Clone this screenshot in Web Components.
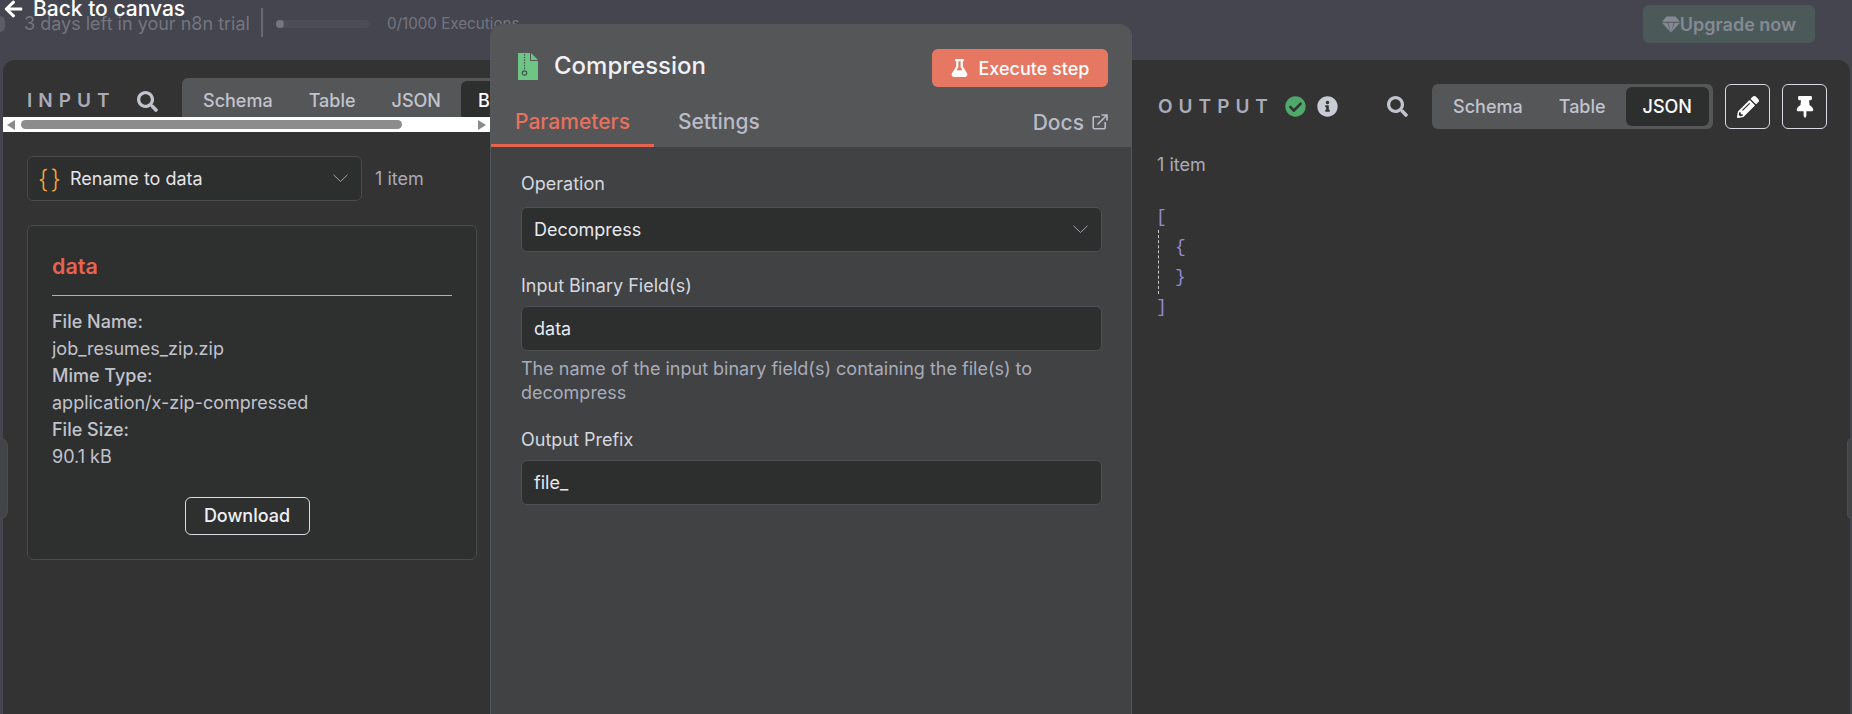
<!DOCTYPE html>
<html lang="en">
<head>
<meta charset="utf-8">
<title>Compression</title>
<style>
  html, body { margin: 0; height: 100%; overflow: hidden; background: #45454f; }
  body { font-family: Inter, "Liberation Sans", sans-serif; }
</style>
</head>
<body>

<ndv-shell>
  <trial-bar slot="top"></trial-bar>
  <input-panel slot="left"></input-panel>
  <node-modal slot="middle">
    <node-param label="Operation" value="Decompress" select first></node-param>
    <node-param label="Input Binary Field(s)" value="data" hint="The name of the input binary field(s) containing the file(s) to decompress"></node-param>
    <node-param label="Output Prefix" value="file_"></node-param>
  </node-modal>
  <output-panel slot="right"></output-panel>
</ndv-shell>

<script>
const ICONS = {
  search: '<svg viewBox="0 0 512 512" fill="currentColor"><path d="M505 442.7L405.3 343c-4.5-4.5-10.6-7-17-7H372c27.6-35.3 44-79.7 44-128C416 93.1 322.9 0 208 0S0 93.1 0 208s93.1 208 208 208c48.3 0 92.7-16.4 128-44v16.3c0 6.4 2.5 12.5 7 17l99.7 99.7c9.4 9.4 24.6 9.4 33.9 0l28.3-28.3c9.4-9.4 9.4-24.6.1-34zM208 336c-70.7 0-128-57.2-128-128 0-70.7 57.2-128 128-128 70.7 0 128 57.2 128 128 0 70.7-57.2 128-128 128z"/></svg>',
  check: '<svg viewBox="0 0 512 512" fill="currentColor"><path d="M504 256c0 136.967-111.033 248-248 248S8 392.967 8 256 119.033 8 256 8s248 111.033 248 248zM227.314 387.314l184-184c6.248-6.248 6.248-16.379 0-22.627l-22.627-22.627c-6.248-6.249-16.379-6.249-22.628 0L216 308.118l-70.059-70.059c-6.248-6.248-16.379-6.248-22.628 0l-22.627 22.627c-6.248 6.248-6.248 16.379 0 22.627l104 104c6.249 6.249 16.379 6.249 22.628.001z"/></svg>',
  info: '<svg viewBox="0 0 512 512" fill="currentColor"><path d="M256 8C119.043 8 8 119.083 8 256c0 136.997 111.043 248 248 248s248-111.003 248-248C504 119.083 392.957 8 256 8zm0 110c23.196 0 42 18.804 42 42s-18.804 42-42 42-42-18.804-42-42 18.804-42 42-42zm56 254c0 6.627-5.373 12-12 12h-88c-6.627 0-12-5.373-12-12v-24c0-6.627 5.373-12 12-12h12v-64h-12c-6.627 0-12-5.373-12-12v-24c0-6.627 5.373-12 12-12h64c6.627 0 12 5.373 12 12v100h12c6.627 0 12 5.373 12 12v24z"/></svg>',
  pen: '<svg viewBox="0 0 512 512" fill="currentColor"><path d="M497.9 142.1l-46.1 46.1c-4.7 4.7-12.3 4.7-17 0l-111-111c-4.7-4.7-4.7-12.3 0-17l46.1-46.1c18.7-18.7 49.1-18.7 67.9 0l60.1 60.1c18.8 18.7 18.8 49.1 0 67.9zM284.2 99.8L21.6 362.4.4 483.9c-2.9 16.4 11.4 30.6 27.8 27.8l121.5-21.3 262.6-262.6c4.7-4.7 4.7-12.3 0-17l-111-111c-4.8-4.7-12.4-4.7-17.1 0zM124.1 339.9c-5.5-5.5-5.5-14.3 0-19.8l154-154c5.5-5.5 14.3-5.5 19.8 0s5.5 14.3 0 19.8l-154 154c-5.5 5.5-14.3 5.5-19.8 0zM88 424h48v36.3l-64.5 11.3-31.1-31.1L51.7 376H88v48z"/></svg>',
  pin: '<svg viewBox="0 0 384 512" fill="currentColor"><path d="M298.028 214.267L285.793 96H328c13.255 0 24-10.745 24-24V24c0-13.255-10.745-24-24-24H56C42.745 0 32 10.745 32 24v48c0 13.255 10.745 24 24 24h42.207L85.972 214.267C37.465 236.82 0 277.261 0 328c0 13.255 10.745 24 24 24h136v104.007c0 1.242.289 2.467.845 3.578l24 48c2.941 5.882 11.364 5.893 14.311 0l24-48a8.008 8.008 0 0 0 .845-3.578V352h136c13.255 0 24-10.745 24-24-.001-51.183-37.983-91.42-85.973-113.733z"/></svg>',
  flask: '<svg viewBox="0 0 448 512" fill="currentColor"><path d="M437.2 403.5L320 215V64h8c13.3 0 24-10.7 24-24V24c0-13.3-10.7-24-24-24H120c-13.3 0-24 10.7-24 24v16c0 13.3 10.7 24 24 24h8v151L10.8 403.5C-18.5 450.6 15.2 512 70.9 512h306.2c55.8 0 89.4-61.5 60.1-108.5zM137.9 320l48.2-77.6c3.7-5.2 5.8-11.6 5.8-18.4V64h64v160c0 6.9 2.2 13.2 5.8 18.4l48.2 77.6h-172z"/></svg>',
  back: '<svg viewBox="0 0 448 512" fill="currentColor"><path d="M257.5 445.1l-22.2 22.2c-9.4 9.4-24.6 9.4-33.9 0L7 273c-9.4-9.4-9.4-24.6 0-33.9L201.4 44.7c9.4-9.4 24.6-9.4 33.9 0l22.2 22.2c9.5 9.5 9.3 25-.4 34.3L136.6 216H424c13.3 0 24 10.7 24 24v32c0 13.3-10.7 24-24 24H136.6l120.5 114.8c9.8 9.3 10 24.8.4 34.3z"/></svg>',
  chevron: '<svg viewBox="0 0 16 9" fill="none" stroke="currentColor" stroke-width="1" style="display:block"><path d="M.5.8 8 8 15.500.8"/></svg>',
  gem: '<svg viewBox="0 0 20 18" fill="currentColor"><path d="M5 0h10l5 6H0zM0 7h6l4 11zM7 7h6l-3 11zM14 7h6L10 18z"/></svg>',
  external: '<svg viewBox="0 0 16 16" fill="none" stroke="currentColor" stroke-width="1.6"><path d="M8 2.800H2.200a1 1 0 0 0-1 1v10a1 1 0 0 0 1 1h10a1 1 0 0 0 1-1V8M5.500 10.500 14.500 1.500M9.500 1h5.500v5.500"/></svg>',
  zip: '<svg viewBox="0 0 20 27" style="display:block"><path fill="#6fc584" d="M0 0h12v8h8v19H0z"/><path fill="#6fc584" d="M13 0l7 7h-7z"/><path fill="none" stroke="#41594a" stroke-width="1.200" stroke-dasharray="1.500 1.200" d="M6.500 1v15"/><circle cx="6.500" cy="20" r="2.200" fill="none" stroke="#41594a" stroke-width="1.200"/></svg>'
};

class NdvShell extends HTMLElement {
  constructor() {
    super();
    this.attachShadow({ mode: "open" }).innerHTML = `
      <style>
        :host { display: block; height: 714px; position: relative; overflow: hidden; }
        .grid {
          display: grid;
          height: 100%;
          grid-template-columns: 3px 487px 642px 1fr 2px;
          grid-template-rows: 60px 1fr;
        }
        .top { grid-row: 1; grid-column: 1 / -1; }
        .left { grid-row: 2; grid-column: 2; min-width: 0; }
        .middle { grid-row: 1 / 3; grid-column: 3; margin-top: 24px; z-index: 2; min-width: 0; }
        .right { grid-row: 2; grid-column: 4; min-width: 0; }
        .back {
          position: absolute; left: 4px; top: -3px; z-index: 3;
          display: flex; align-items: center; gap: 10px;
          color: #fff; font-size: 21px; font-weight: 500; line-height: 24px;
        }
        .back svg { display: block; width: 19px; height: 20px; }
        .handle {
          position: absolute; top: 438px; height: 81px; width: 8px; z-index: 1;
          background: #434447; border: 1px solid #4c4d50; box-sizing: border-box;
        }
        .handle.l { left: 0; border-left: 0; border-radius: 0 8px 8px 0; }
        .handle.r { right: 0; width: 5px; border-right: 0; border-radius: 8px 0 0 8px; }
      </style>
      <div class="grid">
        <div class="top"><slot name="top"></slot></div>
        <div class="left"><slot name="left"></slot></div>
        <div class="middle"><slot name="middle"></slot></div>
        <div class="right"><slot name="right"></slot></div>
      </div>
      <div class="back">${ICONS.back}<span>Back to canvas</span></div>
      <div class="handle l"></div>
      <div class="handle r"></div>
    `;
  }
}

class TrialBar extends HTMLElement {
  constructor() {
    super();
    this.attachShadow({ mode: "open" }).innerHTML = `
      <style>
        :host { display: block; height: 60px; color: #74757f; }
        .bar { display: flex; align-items: flex-start; height: 100%; padding: 5px 37px 0 0; box-sizing: border-box; }
        .avatar { width: 5px; height: 16px; margin: 11px 19px 0 0; background: #5c5c66; border-radius: 0 8px 8px 0; }
        .trial { font-size: 18px; line-height: 38px; }
        .sep { width: 2px; height: 29px; margin: 3px 13px 0 11px; background: #686974; }
        .progress { width: 93px; height: 8px; margin-top: 15px; background: #4d4d58; border-radius: 4px; position: relative; }
        .progress i { position: absolute; left: 0; top: 0; width: 8px; height: 8px; border-radius: 50%; background: #74757f; }
        .execs { font-size: 15.200px; line-height: 38px; margin-left: 18px; }
        .upgrade {
          margin-left: auto; width: 172px; height: 38px;
          display: flex; align-items: center; justify-content: center;
          background: #4b5a59; color: #868994; border-radius: 6px;
          font-size: 18px; font-weight: 600;
        }
        .upgrade svg { display: block; width: 18px; height: 17px; }
      </style>
      <div class="bar">
        <div class="avatar"></div>
        <div class="trial">3 days left in your n8n trial</div>
        <div class="sep"></div>
        <div class="progress"><i></i></div>
        <div class="execs">0/1000 Executions</div>
        <div class="upgrade">${ICONS.gem}<span>Upgrade now</span></div>
      </div>
    `;
  }
}

class ViewTabs extends HTMLElement {
  constructor() {
    super();
    const items = (this.getAttribute("items") || "").split(",");
    const active = this.getAttribute("active");
    this.attachShadow({ mode: "open" }).innerHTML = `
      <style>
        :host { display: block; }
        .tabs {
          display: inline-flex; height: 45px; box-sizing: border-box; padding: 3px 4px 3px 3px;
          background: #555658; border-radius: 6px; color: #c1c3cd;
          font-size: 18px; font-weight: 500;
        }
        .tab { padding: 0 18px; line-height: 39px; border-radius: 6px; }
        .tab.on { background: #2d2e2e; color: #fff; padding: 0 17px; margin-left: 2px; }
      </style>
      <div class="tabs">
        ${items.map((t) => `<div class="tab ${t === active ? "on" : ""}">${t}</div>`).join("")}
      </div>
    `;
  }
}

class InputPanel extends HTMLElement {
  constructor() {
    super();
    this.attachShadow({ mode: "open" }).innerHTML = `
      <style>
        :host { display: block; height: 100%; background: #333333; border-radius: 12px 0 0 0; color: #c1c3cd; overflow: hidden; }
        .head {
          height: 57px; box-sizing: border-box; padding: 18px 0 0 24px; overflow: hidden;
          display: flex; align-items: flex-start;
        }
        .title { width: 87px; font-size: 19px; font-weight: 600; letter-spacing: 6px; color: #a9abb8; line-height: 45px; white-space: nowrap; }
        .search { width: 21px; height: 21px; margin: 13px 24px 0 23px; color: #c1c3cd; flex: none; }
        .search svg { display: block; }
        view-tabs { flex: none; }
        .body { padding: 24px; }
        .row { display: flex; align-items: center; gap: 13px; }
        .select {
          width: 335px; height: 45px; box-sizing: border-box; display: flex; align-items: center;
          padding: 0 13px 0 10px; background: #2d2e2e; border: 1px solid #4a4b4d; border-radius: 6px;
          color: #e4e5ea; font-size: 18px; font-weight: 400;
        }
        .curly { color: #f0a23c; font-size: 25px; font-weight: 300; width: 32px; letter-spacing: 2px; line-height: 28px; }
        .chev { width: 15px; height: 9px; margin-left: auto; color: #a9abb8; }
        .count { color: #a9abb8; font-size: 18px; }
      </style>
      <div class="head">
        <div class="title">INPUT</div>
        <div class="search">${ICONS.search}</div>
        <view-tabs items="Schema,Table,JSON,Binary" active="Binary"></view-tabs>
      </div>
      <fake-scrollbar></fake-scrollbar>
      <div class="body">
        <div class="row">
          <div class="select"><span class="curly">{}</span><span>Rename to data</span><div class="chev">${ICONS.chevron}</div></div>
          <div class="count">1 item</div>
        </div>
        <binary-card></binary-card>
      </div>
    `;
  }
}

class FakeScrollbar extends HTMLElement {
  constructor() {
    super();
    this.attachShadow({ mode: "open" }).innerHTML = `
      <style>
        :host { display: flex; align-items: center; height: 15px; background: #fff; }
        .arrow { width: 0; height: 0; border-top: 5px solid transparent; border-bottom: 5px solid transparent; }
        .arrow.l { margin-left: 4px; border-right: 8px solid #8a8a8a; }
        .arrow.r { margin-left: 76px; border-left: 8px solid #8a8a8a; }
        .thumb { width: 381px; height: 9px; margin-left: 6px; background: #8c8c8c; border-radius: 5px; }
      </style>
      <div class="arrow l"></div>
      <div class="thumb"></div>
      <div class="arrow r"></div>
    `;
  }
}

class BinaryCard extends HTMLElement {
  constructor() {
    super();
    this.attachShadow({ mode: "open" }).innerHTML = `
      <style>
        :host {
          display: block; width: 450px; height: 335px; box-sizing: border-box; margin-top: 24px;
          padding: 26px 24px 0; background: #2e2f2f; border: 1px solid #4a4b4d; border-radius: 6px;
        }
        .name { color: #e8634f; font-size: 21.500px; font-weight: 600; line-height: 29px; }
        .rule { height: 1px; margin: 14px 0 12px; background: #b0b2bb; }
        .meta { font-size: 18px; line-height: 27px; color: #c1c3cd; }
        .meta b { display: block; font-weight: 500; }
        .meta span { display: block; }
        .dl { display: flex; justify-content: center; margin-top: 27px; padding-right: 10px; }
        button {
          width: 125px; height: 38px; padding: 0 0 2px; background: transparent; color: #eef0f6;
          border: 1px solid #d9dbe2; border-radius: 6px; font: 500 18px Inter, sans-serif;
        }
      </style>
      <div class="name">data</div>
      <div class="rule"></div>
      <div class="meta">
        <b>File Name:</b><span>job_resumes_zip.zip</span>
        <b>Mime Type:</b><span>application/x-zip-compressed</span>
        <b>File Size:</b><span>90.1 kB</span>
      </div>
      <div class="dl"><button>Download</button></div>
    `;
  }
}

class NodeModal extends HTMLElement {
  constructor() {
    super();
    this.attachShadow({ mode: "open" }).innerHTML = `
      <style>
        :host {
          display: block; height: 100%; box-sizing: border-box; overflow: hidden;
          background: #414244; border: 1px solid #56575a; border-bottom: 0; border-radius: 12px 12px 0 0;
        }
        .top { background: #555658; height: 122px; box-sizing: border-box; padding-top: 24px; }
        .title { display: flex; align-items: center; height: 38px; padding: 0 23px 0 27px; }
        .zip { width: 20px; height: 27px; flex: none; margin-top: -4px; }
        h1 { margin: -6px 0 0 16px; font-size: 24px; font-weight: 500; color: #f0f1f5; }
        .run {
          margin-left: auto; width: 176px; height: 38px; display: flex; align-items: center; justify-content: center; gap: 11px;
          background: #e67763; color: #fff; border-radius: 6px; font-size: 18px; font-weight: 500;
        }
        .run svg { display: block; width: 17px; height: 18px; }
        .tabs { display: flex; align-items: flex-start; margin-top: 9px; height: 51px; color: #b9bbc6; font-size: 21px; font-weight: 500; }
        .tab { line-height: 52px; height: 48px; padding: 0 24px; }
        .tab.on { color: #e8705c; border-bottom: 3px solid #e8634f; }
        .docs { margin-left: auto; display: flex; align-items: center; gap: 8px; height: 52px; padding-right: 23px; }
        .docs svg { display: block; width: 16px; height: 16px; }
        .body { padding: 25px 29px 25px 30px; }
      </style>
      <div class="top">
        <div class="title">
          <div class="zip">${ICONS.zip}</div>
          <h1>Compression</h1>
          <div class="run">${ICONS.flask}<span>Execute step</span></div>
        </div>
        <div class="tabs">
          <div class="tab on">Parameters</div>
          <div class="tab">Settings</div>
          <div class="docs"><span>Docs</span>${ICONS.external}</div>
        </div>
      </div>
      <div class="body"><slot></slot></div>
    `;
  }
}

class NodeParam extends HTMLElement {
  constructor() {
    super();
    const label = this.getAttribute("label");
    const value = this.getAttribute("value");
    const hint = this.getAttribute("hint");
    const chev = this.hasAttribute("select") ? `<div class="chev">${ICONS.chevron}</div>` : "";
    this.attachShadow({ mode: "open" }).innerHTML = `
      <style>
        :host { display: block; margin-bottom: 22px; }
        .label { font-size: 18px; font-weight: 400; line-height: 24px; color: #d6d8df; margin-bottom: ${this.hasAttribute("first") ? 11 : 8}px; }
        .field {
          height: 45px; box-sizing: border-box; display: flex; align-items: center; padding: 0 11px 0 12px;
          background: #2d2e2e; border: 1px solid #4f5053; border-radius: 6px;
          font-size: 18px; font-weight: 400; color: #e8e9ee;
        }
        .chev { width: 15px; height: 9px; margin-left: auto; margin-right: 2px; color: #a9abb8; }
        .hint { margin-top: 6px; padding-bottom: 1px; font-size: 18px; line-height: 24px; color: #a9abb8; }
      </style>
      <div class="label">${label}</div>
      <div class="field"><span>${value}</span>${chev}</div>
      ${hint ? `<div class="hint">${hint}</div>` : ""}
    `;
  }
}

class OutputPanel extends HTMLElement {
  constructor() {
    super();
    this.attachShadow({ mode: "open" }).innerHTML = `
      <style>
        :host {
          display: block; height: 100%; box-sizing: border-box; padding: 24px 23px 0 26px;
          background: #333333; border-radius: 0 12px 0 0; color: #a9abb8;
        }
        .head { display: flex; align-items: center; height: 45px; }
        .title { width: 116px; margin-right: 11px; font-size: 19px; font-weight: 600; letter-spacing: 6px; white-space: nowrap; }
        .ok { width: 21px; height: 21px; color: #4fa96a; }
        .inf { width: 21px; height: 21px; margin-left: 11px; color: #c9cbd5; }
        .search { width: 21px; height: 21px; margin: 0 24px 0 auto; color: #c1c3cd; }
        .ok svg, .inf svg, .search svg { display: block; }
        .icon-btn {
          width: 45px; height: 45px; box-sizing: border-box; margin-left: 12px;
          display: flex; align-items: center; justify-content: center;
          border: 1px solid #d9dbe2; border-radius: 6px; color: #fff;
        }
        .icon-btn svg { display: block; height: 22px; width: 22px; }
        .count { margin: 24px 0 0 -1px; font-size: 18px; line-height: 24px; }
        .json { margin-top: 25px; font-family: "Liberation Mono", monospace; font-size: 18px; line-height: 30px; color: #918ad2; }
        .json .edge { margin-left: -2px; }
        .json .nest { padding: 2px 0 2px 16px; border-left: 1px dashed #c9c9c9; margin: -2px 0; }
      </style>
      <div class="head">
        <div class="title">OUTPUT</div>
        <div class="ok">${ICONS.check}</div>
        <div class="inf">${ICONS.info}</div>
        <div class="search">${ICONS.search}</div>
        <view-tabs items="Schema,Table,JSON" active="JSON"></view-tabs>
        <div class="icon-btn">${ICONS.pen}</div>
        <div class="icon-btn">${ICONS.pin}</div>
      </div>
      <div class="count">1 item</div>
      <div class="json">
        <div class="edge">[</div>
        <div class="nest"><div>{</div><div>}</div></div>
        <div class="edge">]</div>
      </div>
    `;
  }
}

customElements.define("ndv-shell", NdvShell);
customElements.define("trial-bar", TrialBar);
customElements.define("view-tabs", ViewTabs);
customElements.define("fake-scrollbar", FakeScrollbar);
customElements.define("binary-card", BinaryCard);
customElements.define("input-panel", InputPanel);
customElements.define("node-modal", NodeModal);
customElements.define("node-param", NodeParam);
customElements.define("output-panel", OutputPanel);
</script>
</body>
</html>
